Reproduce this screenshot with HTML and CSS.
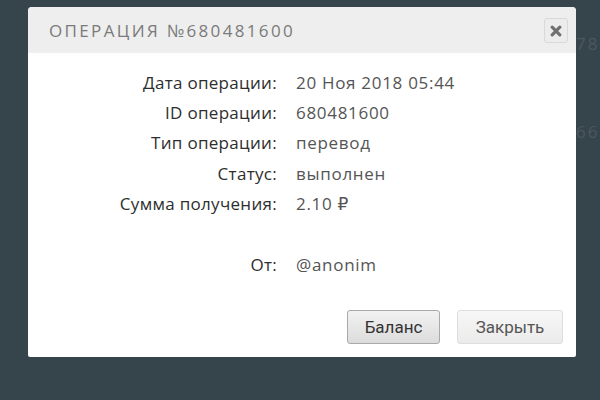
FILE: index.html
```html
<!DOCTYPE html>
<html lang="ru">
<head>
<meta charset="utf-8">
<link rel="stylesheet" href="styles.css">
</head>
<body>
<div class="page">
  <div class="bg-list">
    <div class="bg-item">78</div>
    <div class="bg-item">66</div>
  </div>
</div>
<div class="modal">
  <div class="modal-head">
    <div class="modal-title">Операция №680481600</div>
    <button class="close" aria-label="close">
      <svg width="12" height="12" viewBox="0 0 12 12"><path d="M2.2 2.2 L9.8 9.8 M9.8 2.2 L2.2 9.8" stroke="#707070" stroke-width="3.2" stroke-linecap="round"/></svg>
    </button>
  </div>
  <div class="modal-body">
    <div class="info">
      <div class="label">Дата операции:</div><div class="value">20 Ноя 2018 05:44</div>
      <div class="label">ID операции:</div><div class="value">680481600</div>
      <div class="label">Тип операции:</div><div class="value">перевод</div>
      <div class="label">Статус:</div><div class="value">выполнен</div>
      <div class="label">Сумма получения:</div><div class="value">2.10 ₽</div>
      <div class="label"></div><div class="value"></div>
      <div class="label">От:</div><div class="value">@anonim</div>
    </div>
    <div class="actions">
      <button class="btn btn-primary">Баланс</button>
      <button class="btn btn-light">Закрыть</button>
    </div>
  </div>
</div>
</body>
</html>
```

FILE: styles.css
```css
html, body {
  margin: 0;
  padding: 0;
}
body {
  width: 600px;
  height: 400px;
  background: #36444c;
  overflow: hidden;
  position: relative;
  font-family: "Open Sans", "DejaVu Sans", sans-serif;
}
.page {
  height: 100%;
  display: flex;
  justify-content: flex-end;
}
.bg-list {
  padding-top: 32px;
  width: 24px;
}
.bg-item {
  color: #4b585f;
  font-size: 17px;
  letter-spacing: 2px;
  height: 88px;
}
.modal {
  position: absolute;
  left: 28px;
  top: 7px;
  width: 548px;
  height: 350px;
  background: #fff;
  border-radius: 4px 4px 2px 2px;
  overflow: hidden;
  display: flex;
  flex-direction: column;
}
.modal-head {
  height: 46px;
  background: #eeeeee;
  display: flex;
  align-items: center;
  justify-content: space-between;
  padding: 0 8px 0 21px;
}
.modal-title {
  text-transform: uppercase;
  color: #7a7a7a;
  font-size: 17px;
  letter-spacing: 2.35px;
}
.close {
  width: 24px;
  height: 25px;
  border: 1px solid #d9d9d9;
  border-radius: 3px;
  background: #ececec;
  padding: 0;
  display: flex;
  align-items: center;
  justify-content: center;
  margin-top: 1px;
}
.modal-body {
  flex: 1;
  display: flex;
  flex-direction: column;
  padding: 14px 13px 13px 0;
}
.info {
  display: grid;
  grid-template-columns: 249px 1fr;
  column-gap: 19px;
  grid-auto-rows: 30.4px;
  align-items: center;
  font-size: 17px;
}
.label {
  text-align: right;
  color: #2e2e2e;
  letter-spacing: 0.3px;
}
.value {
  color: #555;
  letter-spacing: 0.7px;
}
.actions {
  margin-top: auto;
  display: flex;
  justify-content: flex-end;
  gap: 17px;
}
.btn {
  height: 34px;
  border-radius: 3px;
  font-family: Roboto, "Liberation Sans", sans-serif;
  font-size: 17px;
  padding: 0;
}
.btn-primary {
  width: 93px;
  color: #333;
  border: 1px solid #a9a9a9;
  background: linear-gradient(#f2f2f2, #dcdcdc);
}
.btn-light {
  width: 106px;
  color: #555;
  border: 1px solid #dedede;
  background: linear-gradient(#f7f7f7, #ebebeb);
}
```
